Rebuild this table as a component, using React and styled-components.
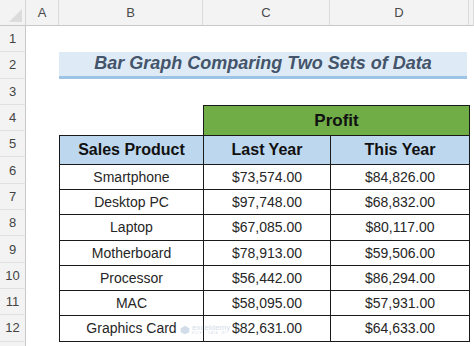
import styled, { createGlobalStyle } from "styled-components";

const GlobalStyle = createGlobalStyle`
  html, body { margin: 0; padding: 0; background: #fff; }
  body { font-family: "Liberation Sans", Arial, sans-serif; overflow: hidden; }
`;

const Sheet = styled.div`
  position: relative;
  width: 474px;
  height: 346px;
  display: grid;
  grid-template-columns: 26px 33px 144px 127px 139px 1fr;
  grid-template-rows: 26px repeat(12, 26.3px) 1fr;
  background: #fff;
`;

const Corner = styled.div`
  grid-column: 1;
  grid-row: 1;
  background: #f3f3f3;
  border-right: 1px solid #d6d6d6;
  border-bottom: 1px solid #c8c8c8;
  position: relative;
  &::after {
    content: "";
    position: absolute;
    right: 3px;
    bottom: 3px;
    border-style: solid;
    border-width: 0 0 13px 13px;
    border-color: transparent transparent #dcdcdc transparent;
  }
`;

const ColHead = styled.div`
  grid-row: 1;
  grid-column: ${(p) => p.col};
  background: #f3f3f3;
  border-right: 1px solid #dadada;
  border-bottom: 1px solid #c8c8c8;
  display: flex;
  align-items: center;
  justify-content: center;
  font-size: 13px;
  color: #4a4a4a;
`;

const RowHead = styled.div`
  grid-column: 1;
  grid-row: ${(p) => p.row};
  background: #f3f3f3;
  border-right: 1px solid #c8c8c8;
  border-bottom: 1px solid #e1e1e1;
  display: flex;
  align-items: center;
  justify-content: center;
  font-size: 13px;
  color: #444;
`;

const RowHeadRest = styled.div`
  grid-column: 1;
  grid-row: 14;
  background: #f3f3f3;
  border-right: 1px solid #c8c8c8;
`;

const Title = styled.div`
  grid-column: 3 / 6;
  grid-row: 3;
  margin-right: 2px;
  background: #deebf7;
  border-bottom: 3px solid #9dc3e6;
  display: flex;
  align-items: center;
  justify-content: center;
  font-size: 18px;
  font-weight: bold;
  font-style: italic;
  color: #44546a;
`;

const Table = styled.table`
  grid-column: 3 / 6;
  grid-row: 5 / 14;
  border-collapse: collapse;
  table-layout: fixed;
  width: 100%;
  height: 100%;
`;

const Cell = styled.td`
  border: ${(p) => (p.$blank ? "none" : "1px solid #1a1a1a")};
  background: ${(p) => p.$bg || "#fff"};
  text-align: center;
  padding: 0;
  font-size: ${(p) => p.$size || 14}px;
  font-weight: ${(p) => (p.$bold ? "bold" : "normal")};
  color: ${(p) => (p.$bold ? "#111" : "#262626")};
  line-height: 1;
`;

const Watermark = styled.div`
  position: absolute;
  left: 180px;
  top: 324px;
  display: flex;
  align-items: center;
  gap: 2px;
  opacity: 0.3;
  pointer-events: none;
`;

const WmText = styled.div`
  display: flex;
  flex-direction: column;
  font-size: 8px;
  color: #6f8fb8;
  line-height: 1;
  & small {
    font-size: 3px;
    letter-spacing: 0.5px;
  }
`;

const rows = [
  ["Smartphone", "$73,574.00", "$84,826.00"],
  ["Desktop PC", "$97,748.00", "$68,832.00"],
  ["Laptop", "$67,085.00", "$80,117.00"],
  ["Motherboard", "$78,913.00", "$59,506.00"],
  ["Processor", "$56,442.00", "$86,294.00"],
  ["MAC", "$58,095.00", "$57,931.00"],
  ["Graphics Card", "$82,631.00", "$64,633.00"],
];

export default function App() {
  return (
    <>
      <GlobalStyle />
      <Sheet>
        <Corner />
        {["A", "B", "C", "D", ""].map((c, i) => (
          <ColHead key={i} col={i + 2}>
            {c}
          </ColHead>
        ))}
        {Array.from({ length: 12 }, (_, i) => (
          <RowHead key={i} row={i + 2}>
            {i + 1}
          </RowHead>
        ))}
        <RowHeadRest />
        <Title>Bar Graph Comparing Two Sets of Data</Title>
        <Table>
          <colgroup>
            <col style={{ width: "144px" }} />
            <col style={{ width: "127px" }} />
            <col style={{ width: "139px" }} />
          </colgroup>
          <tbody>
            <tr>
              <Cell $blank />
              <Cell colSpan={2} $bg="#70ad47" $bold $size={17}>
                Profit
              </Cell>
            </tr>
            <tr>
              <Cell $bg="#bdd7ee" $bold $size={16}>
                Sales Product
              </Cell>
              <Cell $bg="#bdd7ee" $bold $size={16}>
                Last Year
              </Cell>
              <Cell $bg="#bdd7ee" $bold $size={16}>
                This Year
              </Cell>
            </tr>
            {rows.map((r) => (
              <tr key={r[0]}>
                {r.map((v, j) => (
                  <Cell key={j}>{v}</Cell>
                ))}
              </tr>
            ))}
          </tbody>
        </Table>
        <Watermark>
          <svg width="10" height="10" viewBox="0 0 14 14">
            <path d="M7 1 L13 4.5 L13 10 L7 13 L1 10 L1 4.5 Z" fill="#6f8fb8" />
          </svg>
          <WmText>
            exceldemy
            <small>EXCEL · DATA · BI</small>
          </WmText>
        </Watermark>
      </Sheet>
    </>
  );
}
